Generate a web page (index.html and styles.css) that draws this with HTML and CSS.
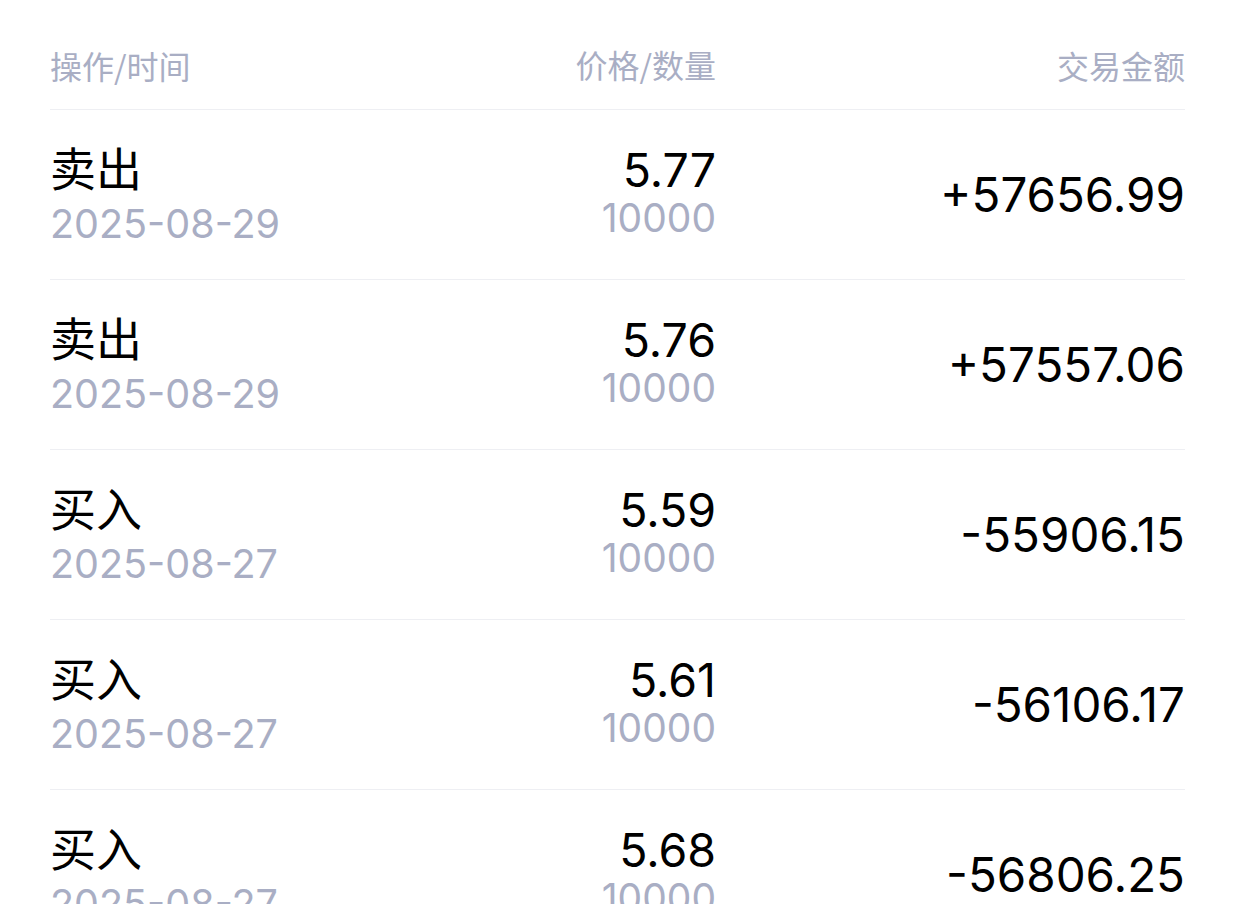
FILE: index.html
```html
<!DOCTYPE html>
<html lang="zh">
<head>
<meta charset="utf-8">
<link rel="stylesheet" href="styles.css">
</head>
<body>
<div class="list">
  <div class="head">
    <div class="c1">操作/时间</div>
    <div class="c2">价格/数量</div>
    <div class="c3">交易金额</div>
  </div>
  <div class="row">
    <div class="c1"><div class="op">卖出</div><div class="sub date">2025-08-29</div></div>
    <div class="c2"><div class="price">5.77</div><div class="sub qty">10000</div></div>
    <div class="c3 amt">+57656.99</div>
  </div>
  <div class="row">
    <div class="c1"><div class="op">卖出</div><div class="sub date">2025-08-29</div></div>
    <div class="c2"><div class="price">5.76</div><div class="sub qty">10000</div></div>
    <div class="c3 amt">+57557.06</div>
  </div>
  <div class="row">
    <div class="c1"><div class="op">买入</div><div class="sub date">2025-08-27</div></div>
    <div class="c2"><div class="price">5.59</div><div class="sub qty">10000</div></div>
    <div class="c3 amt">-55906.15</div>
  </div>
  <div class="row">
    <div class="c1"><div class="op">买入</div><div class="sub date">2025-08-27</div></div>
    <div class="c2"><div class="price">5.61</div><div class="sub qty">10000</div></div>
    <div class="c3 amt">-56106.17</div>
  </div>
  <div class="row">
    <div class="c1"><div class="op">买入</div><div class="sub date">2025-08-27</div></div>
    <div class="c2"><div class="price">5.68</div><div class="sub qty">10000</div></div>
    <div class="c3 amt">-56806.25</div>
  </div>
</div>
</body>
</html>
```

FILE: styles.css
```css
html, body {
  margin: 0;
  padding: 0;
  background: #ffffff;
}
body {
  font-family: Inter, "Liberation Sans", "Noto Sans CJK SC", sans-serif;
  color: #000;
  overflow: hidden;
  height: 904px;
}
.list {
  padding: 0 50px 0 50px;
}
.head, .row {
  display: grid;
  grid-template-columns: 333px 333px 1fr;
  align-items: center;
  border-bottom: 1px solid #eeeff3;
}
.head {
  height: 110px;
  box-sizing: border-box;
  padding-top: 20px;
  font-family: "Noto Sans CJK SC", sans-serif;
  font-size: 32px;
  color: #a9aec4;
}
.row {
  height: 170px;
  box-sizing: border-box;
}
.c2, .c3 {
  text-align: right;
}
.c2 {
  padding-bottom: 2px;
}
.op {
  font-family: "Noto Sans CJK SC", sans-serif;
  font-size: 46px;
  line-height: 54px;
}
.sub {
  color: #a9aec4;
}
.date {
  font-size: 39.5px;
  line-height: 54px;
  margin-top: 4px;
}
.price {
  font-size: 46.5px;
  line-height: 47px;
}
.qty {
  font-size: 39px;
  line-height: 47px;
}
.amt {
  font-size: 47.5px;
}
```
